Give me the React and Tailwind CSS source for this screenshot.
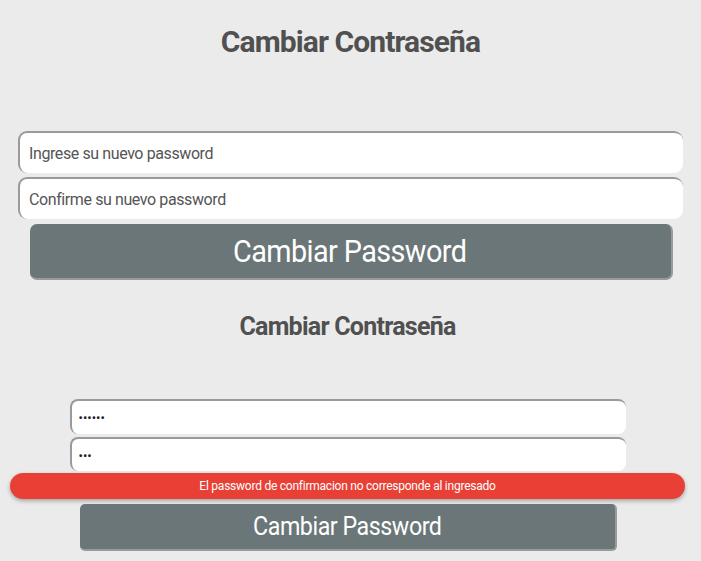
import { useState } from 'react';

const font = { fontFamily: 'Roboto, "Liberation Sans", sans-serif' };

const App = () => {
  const [pass, setPass] = useState('');
  const [confirm, setConfirm] = useState('');

  return (
    <div style={font} className="w-[701px] h-[561px] overflow-hidden bg-[#ebebeb] text-[#555]">
      {/* First form: empty state */}
      <div className="flex flex-col items-center pt-[22px]">
        <h1 className="text-[30px] font-bold leading-[40px] tracking-[-0.03em] text-[#505050]">Cambiar Contraseña</h1>
        <div className="w-full px-[18px] mt-[69px] flex flex-col gap-[4px]">
          <input
            className="w-[665px] h-[42px] bg-white rounded-[9px] border-t-2 border-l-2 border-[#9a9a9a] px-[9px] text-[16px] tracking-[-0.025em] text-[#444] placeholder:text-[#555] outline-none"
            placeholder="Ingrese su nuevo password"
            value={pass}
            onChange={(e) => setPass(e.target.value)}
          />
          <input
            className="w-[665px] h-[42px] bg-white rounded-[9px] border-t-2 border-l-2 border-[#9a9a9a] px-[9px] text-[16px] tracking-[-0.025em] text-[#444] placeholder:text-[#555] outline-none"
            placeholder="Confirme su nuevo password"
            value={confirm}
            onChange={(e) => setConfirm(e.target.value)}
          />
        </div>
        <button className="mt-[5px] w-[643px] h-[56px] ml-[1px] bg-[#6b7678] rounded-[7px] border-r-2 border-b-2 border-[#9a9a9a] text-white text-[32px] leading-none">
          <span className="inline-block scale-x-[0.9] tracking-[-0.02em]">Cambiar Password</span>
        </button>
      </div>

      {/* Second form: error state */}
      <div className="flex flex-col items-center mt-[32px] pr-[6px]">
        <h2 className="text-[25px] font-bold leading-[30px] tracking-[-0.03em] text-[#505050]">Cambiar Contraseña</h2>
        <div className="mt-[57px] flex flex-col gap-[3px]">
          <input
            type="password"
            readOnly
            value="123456"
            className="w-[556px] h-[35px] bg-white rounded-[8px] border-t-2 border-l-2 border-[#9a9a9a] px-[7px] text-[13px] text-[#222] outline-none"
          />
          <input
            type="password"
            readOnly
            value="123"
            className="w-[556px] h-[34px] bg-white rounded-[8px] border-t-2 border-l-2 border-[#9a9a9a] px-[7px] text-[13px] text-[#222] outline-none"
          />
        </div>
        <div className="mt-[2px] w-[675px] h-[26px] rounded-full bg-[#e84035] shadow-[0_2px_4px_rgba(0,0,0,0.3)] flex items-center justify-center text-white text-[12px] tracking-[-0.02em]">
          El password de confirmacion no corresponde al ingresado
        </div>
        <button className="mt-[5px] w-[537px] h-[47px] ml-[1px] bg-[#6b7678] rounded-[5px] border-r-2 border-b-2 border-[#9a9a9a] text-white text-[25px] leading-none">
          <span className="inline-block scale-x-[0.93] tracking-[-0.02em]">Cambiar Password</span>
        </button>
      </div>
    </div>
  );
};

export default App;
